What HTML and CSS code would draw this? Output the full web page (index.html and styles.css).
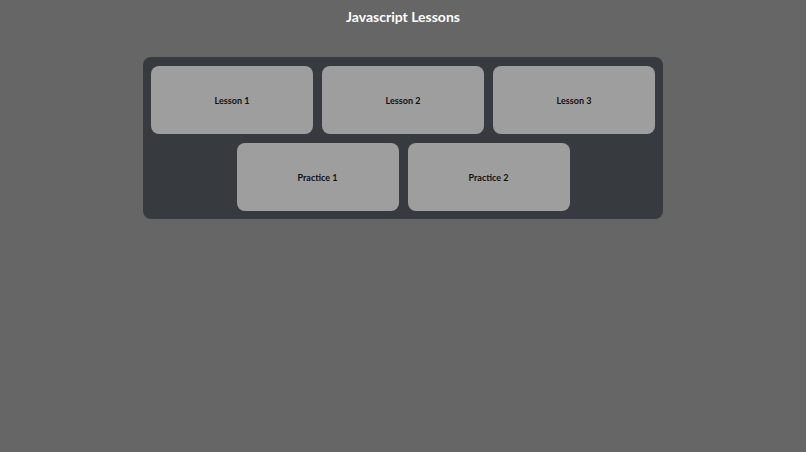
FILE: index.html
```html
<!DOCTYPE html>
<html>
<head>
<meta charset="utf-8">
<link rel="stylesheet" href="styles.css">
</head>
<body>
<h1 class="title">Javascript Lessons</h1>
<div class="board">
  <div class="card">Lesson 1</div>
  <div class="card">Lesson 2</div>
  <div class="card">Lesson 3</div>
  <div class="card">Practice 1</div>
  <div class="card">Practice 2</div>
</div>
</body>
</html>
```
FILE: styles.css
```css
html, body {
  margin: 0;
  padding: 0;
  background: #666666;
  font-family: Lato, "Open Sans", sans-serif;
}
body {
  display: flex;
  flex-direction: column;
  align-items: center;
}
.title {
  margin: 7px 0 0 0;
  height: 20px;
  line-height: 20px;
  font-size: 14px;
  font-weight: 700;
  color: #ffffff;
}
.board {
  margin-top: 30px;
  width: 520px;
  box-sizing: border-box;
  padding: 9px 8px 8px 8px;
  background: #373b3f;
  border-radius: 8px;
  display: flex;
  flex-wrap: wrap;
  justify-content: center;
  gap: 9px;
}
.card {
  width: 162px;
  height: 68px;
  background: #9e9e9e;
  border-radius: 8px;
  display: flex;
  align-items: center;
  justify-content: center;
  font-size: 9px;
  font-weight: 700;
  color: #111111;
}
```
